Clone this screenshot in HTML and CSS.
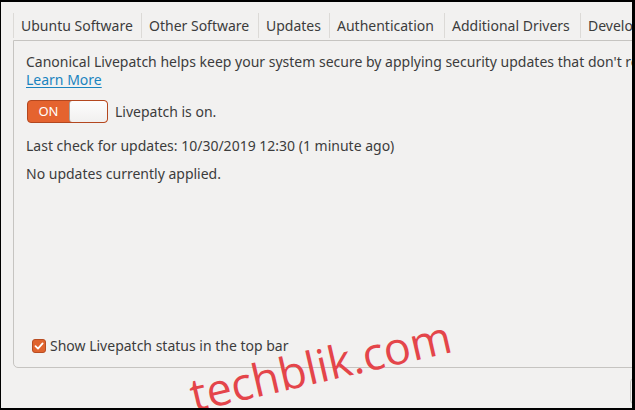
FILE: index.html
```html
<!DOCTYPE html>
<html lang="en">
<head>
    <meta charset="UTF-8">
    <title>Software &amp; Updates - Livepatch</title>
    <link rel="stylesheet" href="styles.css">
</head>
<body>
    <div class="window">
        <div class="tabs">
            <div class="tab tab-ubuntu">Ubuntu Software</div>
            <div class="tab tab-other">Other Software</div>
            <div class="tab tab-updates">Updates</div>
            <div class="tab tab-auth">Authentication</div>
            <div class="tab tab-drivers">Additional Drivers</div>
            <div class="tab tab-dev">Developer Options</div>
        </div>
        <div class="panel">
            <p class="intro">Canonical Livepatch helps keep your system secure by applying security updates that don't require a restart.</p>
            <a class="link" href="#">Learn More</a>
            <div class="switch-row">
                <div class="switch">
                    <span class="switch-on">ON</span>
                    <span class="switch-knob"></span>
                </div>
                <span>Livepatch is on.</span>
            </div>
            <p class="status">Last check for updates: 10/30/2019 12:30 (1 minute ago)</p>
            <p class="status">No updates currently applied.</p>
            <label class="check-row">
                <span class="checkbox">
                    <svg width="10" height="10" viewBox="0 0 10 10">
                        <path d="M1.5 5.2 L4 7.6 L8.6 2.4" fill="none" stroke="#fff" stroke-width="1.8" stroke-linecap="round" stroke-linejoin="round"/>
                    </svg>
                </span>
                Show Livepatch status in the top bar
            </label>
        </div>
        <div class="footer">
            <button class="btn">Revert</button>
        </div>
    </div>
    <div class="watermark">techblik.com</div>
</body>
</html>
```

FILE: styles.css
```css
/* Software & Updates - Livepatch tab */
html {
    background: #000;
}

body {
    margin: 0;
    width: 635px;
    height: 410px;
    box-sizing: border-box;
    border-style: solid;
    border-color: #000;
    border-width: 2px 3px 2px 1px;
    background-color: #f2f1f0;
    font-family: "Noto Sans", "Open Sans", sans-serif;
    font-size: 14px;
    color: #3c3c3c;
    overflow: hidden;
    position: relative;
}

.window {
    padding: 11px 0 0 12px;
}

.tabs {
    display: flex;
    height: 25px;
    margin-bottom: 2px;
    white-space: nowrap;
}

.tab {
    flex: none;
    box-sizing: border-box;
    padding-left: 7px;
    line-height: 25px;
    border-left: 1px solid #dcdad7;
    overflow: hidden;
}

.tab-ubuntu { width: 128px; }
.tab-other { width: 117px; }
.tab-updates { width: 71px; }
.tab-auth { width: 115px; }
.tab-drivers { width: 136px; }
.tab-dev { width: 120px; }

.panel {
    height: 328px;
    box-sizing: border-box;
    margin-right: -20px;
    border: 1px solid #c6c4c1;
    border-bottom-left-radius: 5px;
    padding: 12px 0 12px 12px;
    display: flex;
    flex-direction: column;
    align-items: flex-start;
    white-space: nowrap;
    line-height: 18px;
}

.panel p {
    margin: 0;
}

.link {
    color: #1a84bf;
    text-decoration: underline;
    text-underline-offset: 2px;
}

.switch-row {
    display: flex;
    align-items: center;
    gap: 7px;
    margin-top: 11px;
}

.switch {
    display: flex;
    width: 81px;
    height: 23px;
    box-sizing: border-box;
    border: 1px solid #b3471f;
    border-radius: 4px;
    background: #e5632f;
    overflow: hidden;
    margin-left: 1px;
}

.switch-on {
    width: 41px;
    color: #fff;
    font-size: 13px;
    line-height: 21px;
    text-align: center;
}

.switch-knob {
    flex: 1;
    background: linear-gradient(#fdfdfd, #f1f0ef);
    border-left: 1px solid #a9a4a0;
    border-radius: 3px;
}

.status {
    margin-top: 14px !important;
}

.status + .status {
    margin-top: 10px !important;
}

.check-row {
    margin-top: auto;
    display: flex;
    align-items: center;
    gap: 4px;
    margin-left: 6px;
}

.checkbox {
    width: 14px;
    height: 14px;
    box-sizing: border-box;
    background: #e0642e;
    border: 1px solid #b84d22;
    border-radius: 3px;
    display: flex;
    align-items: center;
    justify-content: center;
}

.footer {
    display: flex;
    justify-content: flex-end;
    padding-top: 10px;
}

.btn {
    width: 80px;
    height: 26px;
    margin-right: -78px;
    border: 1px solid #c6c4c1;
    border-radius: 4px;
    background: #f4f3f2;
    font: inherit;
}

.watermark {
    position: absolute;
    left: 186px;
    top: 340px;
    font-family: "Open Sans", sans-serif;
    font-size: 45px;
    color: #e4454a;
    transform: rotate(-13deg);
    transform-origin: center;
    line-height: 1;
}
```
